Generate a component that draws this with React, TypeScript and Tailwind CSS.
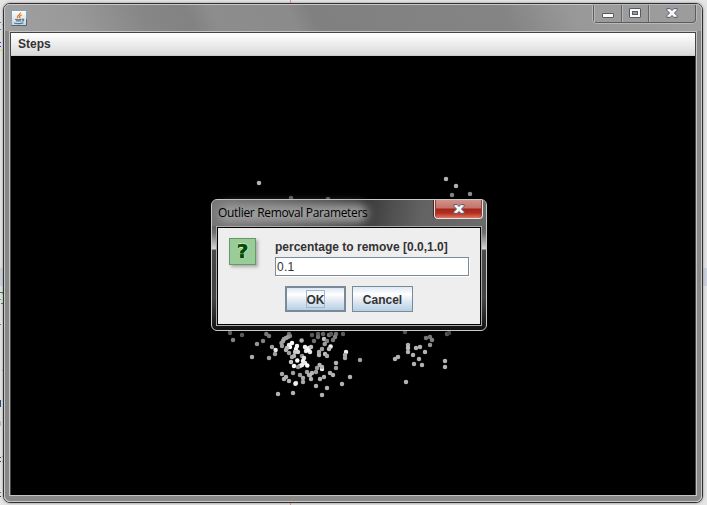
import React from "react";

type Dot = [number, number, number?];

// Scatter points: x, y and brightness, in canvas coordinates of the page.
const dots: Dot[] = [
  [259, 183], [446, 179], [456, 186], [452, 195, 130], [470, 194, 140], [291, 198, 90], [328, 199, 90],
  [230, 333, 90], [242, 335, 90], [233, 340, 130], [266.3, 334, 120], [269, 336, 120], [263, 341, 130], [257, 344, 150],
  [272, 347, 160], [275.6, 350, 235], [275, 354, 160], [252, 357, 170], [269, 358, 160],
  [289, 334, 110], [290, 336, 130], [288, 337, 150], [286, 338, 160], [284, 339, 160], [283, 341, 170], [281.5, 343, 160], [282, 346, 160],
  [301.6, 340.6, 180], [312, 335, 90], [314, 341, 110], [318, 334, 90], [318, 337, 110], [323, 334, 100], [324, 339, 190],
  [329, 335, 120], [331, 334, 90], [336, 334, 110], [335, 337, 130], [333, 340, 120], [343, 334, 90], [327, 341, 130], [324.7, 344, 160],
  [289, 345, 230], [292, 343, 250], [290, 347, 250], [287, 348, 190], [286, 350, 180], [289, 353, 160], [297, 346, 245], [296, 349, 245], [295, 352, 200], [298, 352, 210],
  [305, 347, 240], [309, 348, 240], [306, 351, 230], [310, 352, 230], [308, 350, 250], [311, 347, 190],
  [322, 349, 160], [319, 352, 170], [319, 355, 180], [330.6, 346.6, 240], [329, 349, 190], [325, 354, 190], [327, 356, 170],
  [346, 352, 240], [345, 355, 170], [345, 358, 170], [360, 360, 160], [336, 363, 180], [336, 368, 160],
  [302, 356, 150], [292, 357, 170], [294, 356, 180], [291, 362, 200], [297.3, 360.5, 255], [304, 358, 225], [303, 361, 245], [305, 363, 230], [294, 366, 250], [307.3, 365.6, 255], [300, 366, 220], [302, 365, 235], [298, 367, 150],
  [319.6, 365, 180], [317, 368, 160], [322, 369, 245], [322, 367, 180], [307, 372, 160], [312, 373, 180], [310, 375, 190], [316, 372, 160],
  [330, 373, 180], [333, 375, 180], [282, 374, 170], [293, 373, 160], [300, 375, 160], [303, 378, 170], [303, 382, 170],
  [286, 377, 180], [284, 379, 180], [289, 381, 180], [296, 383, 190], [295.4, 383.7, 240], [311, 379], [320, 379], [324, 377],
  [350, 377], [342, 384], [316, 386], [327, 388], [293, 393], [278, 394], [322, 395], [309, 375],
  [405, 332, 80], [408, 345], [408, 348, 190], [408, 352], [416, 348], [420, 347], [425, 352], [413, 355], [419, 359],
  [398, 357], [395, 359], [414, 364], [422, 365], [430, 345, 150], [426, 338, 120], [430, 337, 120], [432, 340, 130],
  [447, 334, 90], [449, 333, 70], [445, 361], [445, 367], [406, 382],
];

function PointCloud() {
  return (
    <svg className="absolute left-0 top-0" width="707" height="505">
      {dots.map(([x, y, v = 178], i) => (
        <circle key={i} cx={x} cy={y} r="2.25" fill={`rgb(${v},${v},${v})`} />
      ))}
    </svg>
  );
}

function JavaIcon() {
  return (
    <svg width="16" height="16" viewBox="0 0 16 16">
      <defs>
        <linearGradient id="jv" x1="0" y1="0" x2="0" y2="1">
          <stop stopColor="#fdfefe" /><stop offset="1" stopColor="#c8d5dc" />
        </linearGradient>
      </defs>
      <rect x="0.5" y="0.5" width="15" height="15" fill="url(#jv)" stroke="#8ba0ac" />
      <path d="M0.5 15.5h15V9" fill="none" stroke="#49687a" />
      <path d="M9.3 2.5c.8 2.2-4.2 3-2.6 5.7M10.8 5c-2.3.8-2.8 1.8-1.7 3.3" fill="none" stroke="#e77b24" strokeWidth="1.3" />
      <path d="M4.2 9.2c1 .8 5.2.8 6.3 0M5 11h5M3 12.9c2.5 1 7.5.9 9.4-.1M11 9.2c2.6-.6 2.2 1.8-.3 2" fill="none" stroke="#527693" strokeWidth="1.1" />
    </svg>
  );
}

function CloseGlyph() {
  return (
    <svg width="12" height="10" viewBox="0 0 12 10">
      <path d="M.8.6h3.4L6 2.5 7.8.6h3.4v1.6L8.5 5l2.7 2.8v1.6H7.8L6 7.5 4.2 9.4H.8V7.8L3.5 5 .8 2.2z" fill="#f7f7f7" stroke="#555a6c" strokeWidth="1" />
    </svg>
  );
}

function WindowControls() {
  return (
    <div className="mr-[5px] flex h-[18px] w-[103px] rounded-b-[4px] border border-t-0 border-[#5c5c5c] bg-[#9c9c9c] shadow-[0_0_0_1px_#b9b9b9]">
      <div className="flex w-[28px] items-center justify-center border-r border-[#666] shadow-[inset_1px_0_0_#b8b8b8]">
        <svg className="mt-[4px]" width="12" height="5"><rect x=".5" y=".5" width="11" height="4" rx=".5" fill="#fafafa" stroke="#555a6b" /></svg>
      </div>
      <div className="flex w-[27px] items-center justify-center border-r border-[#666] shadow-[inset_1px_0_0_#b8b8b8]">
        <svg className="-mt-px" width="12" height="10"><rect x=".5" y=".5" width="11" height="9" rx=".5" fill="#fafafa" stroke="#555a6b" /><rect x="3.5" y="3.5" width="5" height="3" fill="#999" stroke="#555a6b" /></svg>
      </div>
      <div className="flex flex-1 items-center justify-center pb-px shadow-[inset_1px_0_0_#b8b8b8]"><CloseGlyph /></div>
    </div>
  );
}

function Dialog() {
  return (
    <div className="absolute left-[211px] top-[199px] flex h-[132px] w-[276px] flex-col rounded-[6px] border border-[#c9c9c9] bg-[linear-gradient(180deg,#777_0px,#606060_25px,#707070_33px,#d8d8d8_49px,#4a4a4a_50px,#444_75px,#444_98px,#111_130px)] px-[4px] pb-[4px]">
      <div className="pointer-events-none absolute inset-x-0 top-0 h-[26px] rounded-t-[5px] bg-[linear-gradient(100deg,#777_0px,#606060_70px,#383838_150px,#505050_180px,#636363_210px,#6b6b6b_274px)]" />
      <div className="relative flex h-[26px] shrink-0 justify-between">
        <div className="pointer-events-none absolute left-[2px] top-[4px] h-[19px] w-[150px] rounded-full bg-[#9b9b9b] blur-[5px]" />
        <div className="relative whitespace-nowrap pl-[2px] pt-[5px] font-['Open_Sans',sans-serif] text-[12px] leading-[16px] tracking-[-0.33px] text-black">Outlier Removal Parameters</div>
        <div className="-mr-px flex h-[19px] w-[49px] items-center justify-center rounded-b-[4px] border border-t-0 border-[#eee0de] bg-[linear-gradient(180deg,#cf938a_0,#c5736a_8px,#a3261b_9px,#b52c1d_13px,#dd7761_18px)] pb-px shadow-[inset_1px_0_0_#88453b,inset_-1px_0_0_#88453b,-1px_0_0_#4b2522]">
          <CloseGlyph />
        </div>
      </div>
      <div className="relative flex min-h-0 flex-1 flex-col border border-[#aaa] bg-[#eee]">
        <div className="flex min-h-0 flex-1 border border-black pl-[11px] pt-[10px]">
          <div className="flex h-[27px] w-[27px] shrink-0 items-center justify-center border border-[#669966] bg-[#99cc99] pb-[2px] font-['DejaVu_Sans',sans-serif] text-[20px] font-bold leading-none text-[#004d00] shadow-[2px_2px_3px_#aaa] [-webkit-text-stroke:0.6px_#004d00] [text-shadow:-1px_0_#dff4df,1px_0_#dff4df,0_-1px_#dff4df,0_1px_#dff4df]">?</div>
          <div className="ml-[19px] w-[194px]">
            <div className="whitespace-nowrap font-['Liberation_Sans',Arial,sans-serif] text-[12px] font-bold leading-[19px] text-[#333]">percentage to remove [0.0,1.0]</div>
            <div className="h-[19px] border border-[#7a8a99] bg-white pl-px font-['Liberation_Sans',Arial,sans-serif] text-[12px] leading-[19px] tracking-[0.3px] text-[#333] shadow-[1px_1px_0_white]">0.1</div>
            <div className="mt-[10px] flex gap-[6px] pl-[10px] font-['Liberation_Sans',Arial,sans-serif] text-[12px] font-bold text-[#333]">
              <button className="flex h-[26px] w-[61px] items-center justify-center border-2 border-[#7a8a99] bg-[linear-gradient(180deg,#dde8f3_0%,#fff_30%,#e8eff6_50%,#b8cfe5_100%)]">
                <span className="flex h-[18px] w-[19px] items-center justify-center border border-[#a3b8cc] pt-[2px]">OK</span>
              </button>
              <button className="flex h-[26px] w-[61px] items-center justify-center border border-[#7a8a99] bg-[linear-gradient(180deg,#dde8f3_0%,#fff_30%,#e8eff6_50%,#b8cfe5_100%)] pt-[2px]">Cancel</button>
            </div>
          </div>
        </div>
      </div>
    </div>
  );
}

// Slivers of the editor behind the window.
function Backdrop() {
  return (
    <svg className="absolute left-0 top-0" width="707" height="505">
      <rect y="268" width="707" height="18" fill="#cdd2de" />
      <path d="M290.5 0v3M290.5 503v2" stroke="#ef8585" />
      <path d="M0 22.5h1M0 29.5h1M0 324.5h1M0 492.5h1" stroke="#3987c3" />
      <path d="M0 42.5h1M0 46.5h1M0 457.5h1M0 461.5h1M0 496.5h1" stroke="#173ac5" />
      <path d="M0 50.5h2" stroke="#f7df22" />
      <path d="M0 292.5h3M1 303.5h2" stroke="#168c16" />
      <path d="M2 24.5h1M2 370.5h1M0 425.5h1M2 456.5h1M2 461.5h1" stroke="#d5a650" />
      <path d="M0 299.5h1M2 293.5h1" stroke="#38aeb7" />
      <rect y="400" width="1" height="7" fill="#29457c" /><rect y="421" width="1" height="5" fill="#b9b7dc" />
    </svg>
  );
}

export default function App() {
  return (
    <div className="relative h-[505px] w-[707px] overflow-hidden bg-[#e6e5e5] p-[3px]">
      <Backdrop />
      <div className="relative h-[500px] w-[700px] rounded-[7px] border border-[#303030] shadow-[0_0_3px_#888]">
        <div className="flex h-full flex-col rounded-[6px] border border-[#c8c8c8] bg-[#888] px-[4px] pb-[5px]">
          <div className="-mx-[4px] flex h-[26px] shrink-0 justify-between rounded-t-[5px] bg-[linear-gradient(65deg,#a0a0a0_0px,#999_70px,#878787_130px,#828282_172px,#8d8d8d_195px,#8b8b8b_265px,#808080_285px,#848484_460px,#989898_520px,#a0a0a0_640px)]">
            <div className="pl-[6px] pt-[5px]"><JavaIcon /></div>
            <WindowControls />
          </div>
          <div className="flex min-h-0 flex-1 flex-col border border-[#c4c4c4]">
            <div className="flex min-h-0 flex-1 flex-col border border-b-0 border-[#454545] bg-black">
              <div className="h-[23px] shrink-0 border-b border-[#ccc] bg-gradient-to-b from-white to-[#dadada] pl-[7px] font-['Liberation_Sans',Arial,sans-serif] text-[12px] font-bold leading-[22px] text-[#333]">Steps</div>
            </div>
          </div>
        </div>
      </div>
      <PointCloud />
      <Dialog />
    </div>
  );
}
